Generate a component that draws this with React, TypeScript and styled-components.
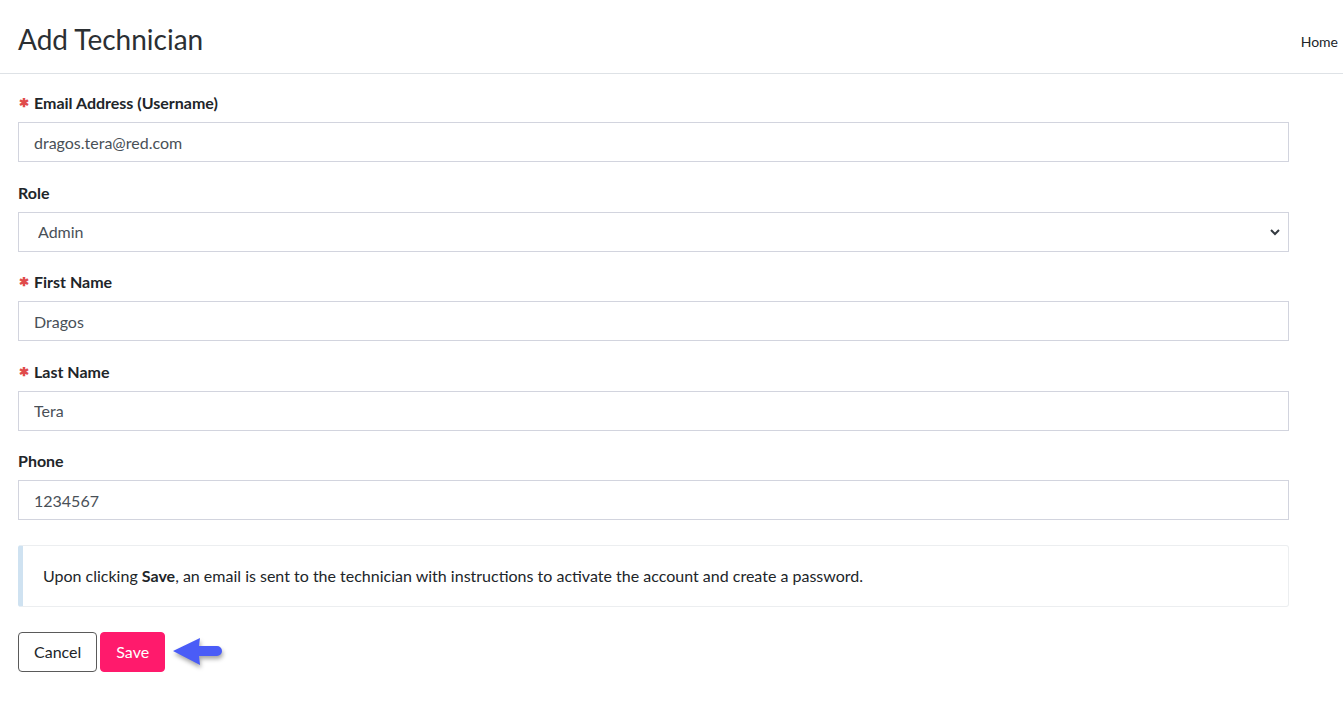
import * as React from 'react';
import styled, { createGlobalStyle } from 'styled-components';

const GlobalStyle = createGlobalStyle`
  html, body {
    margin: 0;
    padding: 0;
    background: #fff;
  }
  body {
    font-family: Lato, "Open Sans", "Noto Sans", sans-serif;
    color: #212529;
  }
  * {
    box-sizing: border-box;
  }
`;

const Page = styled.div`
  width: 1343px;
  min-height: 716px;
  background: #fff;
`;

const Header = styled.header`
  height: 74px;
  display: flex;
  align-items: center;
  justify-content: space-between;
  padding: 0 5px 0 18px;
  border-bottom: 1px solid #dee2e6;
`;

const Title = styled.h1`
  margin: 0;
  font-size: 28px;
  font-weight: 400;
  color: #2b2f33;
  padding-top: 5px;
`;

const Crumb = styled.a`
  font-size: 14px;
  color: #212529;
  text-decoration: none;
  padding-top: 10px;
`;

const Form = styled.form`
  width: 1289px;
  padding: 17px 0 0 18px;
  display: flex;
  flex-direction: column;
`;

const Group = styled.div`
  display: flex;
  flex-direction: column;
  margin-bottom: 18.5px;
`;

const Label = styled.label`
  display: flex;
  align-items: center;
  gap: 5px;
  font-size: 16px;
  font-weight: 700;
  line-height: 24px;
  margin-bottom: 7px;
  color: #212529;
`;

const Star = styled.span`
  color: #e04b4b;
  font-size: 12px;
  line-height: 1;
  margin-left: 1px;
`;

const fieldCss = `
  height: 40px;
  width: 100%;
  border: 1px solid #d2d4de;
  border-radius: 0;
  background: #fff;
  font-family: Lato, "Open Sans", "Noto Sans", sans-serif;
  font-size: 16px;
  color: #495057;
  outline: none;
`;

const Input = styled.input`
  ${fieldCss}
  padding: 0 15px;
`;

const SelectWrap = styled.div`
  position: relative;
`;

const Select = styled.select`
  ${fieldCss}
  padding: 0 15px 0 19px;
  appearance: none;
`;

const Chevron = styled.svg`
  position: absolute;
  right: 9px;
  top: 16px;
  pointer-events: none;
`;

const Callout = styled.div`
  margin-top: 6px;
  border: 1px solid #eceef0;
  border-left: 5px solid #cfe2f1;
  border-radius: 3px;
  padding: 19px 20px 20px 20px;
  font-size: 16px;
  line-height: 21px;
  color: #212529;
`;

const Actions = styled.div`
  display: flex;
  align-items: center;
  gap: 3px;
  margin-top: 25px;
`;

const Button = styled.button<{ $primary?: boolean }>`
  height: 40px;
  padding: 0 15px;
  font-family: Lato, "Open Sans", "Noto Sans", sans-serif;
  font-size: 16px;
  border-radius: 4px;
  cursor: pointer;
  border: 1px solid ${(p) => (p.$primary ? '#ff1a6c' : '#5a5a5a')};
  background: ${(p) => (p.$primary ? '#ff1a6c' : '#fff')};
  color: ${(p) => (p.$primary ? '#fff' : '#212529')};
`;

const Arrow = styled.svg`
  margin-left: 3px;
  filter: drop-shadow(1px 3px 2px rgba(0, 0, 0, 0.35));
`;

export default function App() {
  return (
    <Page>
      <GlobalStyle />
      <Header>
        <Title>Add Technician</Title>
        <Crumb href="#">Home</Crumb>
      </Header>
      <Form onSubmit={(e) => e.preventDefault()}>
        <Group>
          <Label>
            <Star>✱</Star>Email Address (Username)
          </Label>
          <Input defaultValue="dragos.tera@red.com" />
        </Group>
        <Group>
          <Label>Role</Label>
          <SelectWrap>
            <Select defaultValue="Admin">
              <option>Admin</option>
              <option>Technician</option>
            </Select>
            <Chevron width="10" height="8" viewBox="0 0 10 8">
              <path d="M1 2 L5 6 L9 2" fill="none" stroke="#343a40" strokeWidth="2" />
            </Chevron>
          </SelectWrap>
        </Group>
        <Group>
          <Label>
            <Star>✱</Star>First Name
          </Label>
          <Input defaultValue="Dragos" />
        </Group>
        <Group>
          <Label>
            <Star>✱</Star>Last Name
          </Label>
          <Input defaultValue="Tera" />
        </Group>
        <Group>
          <Label>Phone</Label>
          <Input defaultValue="1234567" />
        </Group>
        <Callout>
          Upon clicking <b>Save</b>, an email is sent to the technician with instructions to
          activate the account and create a password.
        </Callout>
        <Actions>
          <Button type="button">Cancel</Button>
          <Button type="submit" $primary>
            Save
          </Button>
          <Arrow width="54" height="32" viewBox="0 0 54 32">
            <path d="M2 15 L29 2 L28 10 L46 10 A5 5 0 0 1 46 20 L28 20 L29 29 Z" fill="#4a5cf7" />
          </Arrow>
        </Actions>
      </Form>
    </Page>
  );
}
